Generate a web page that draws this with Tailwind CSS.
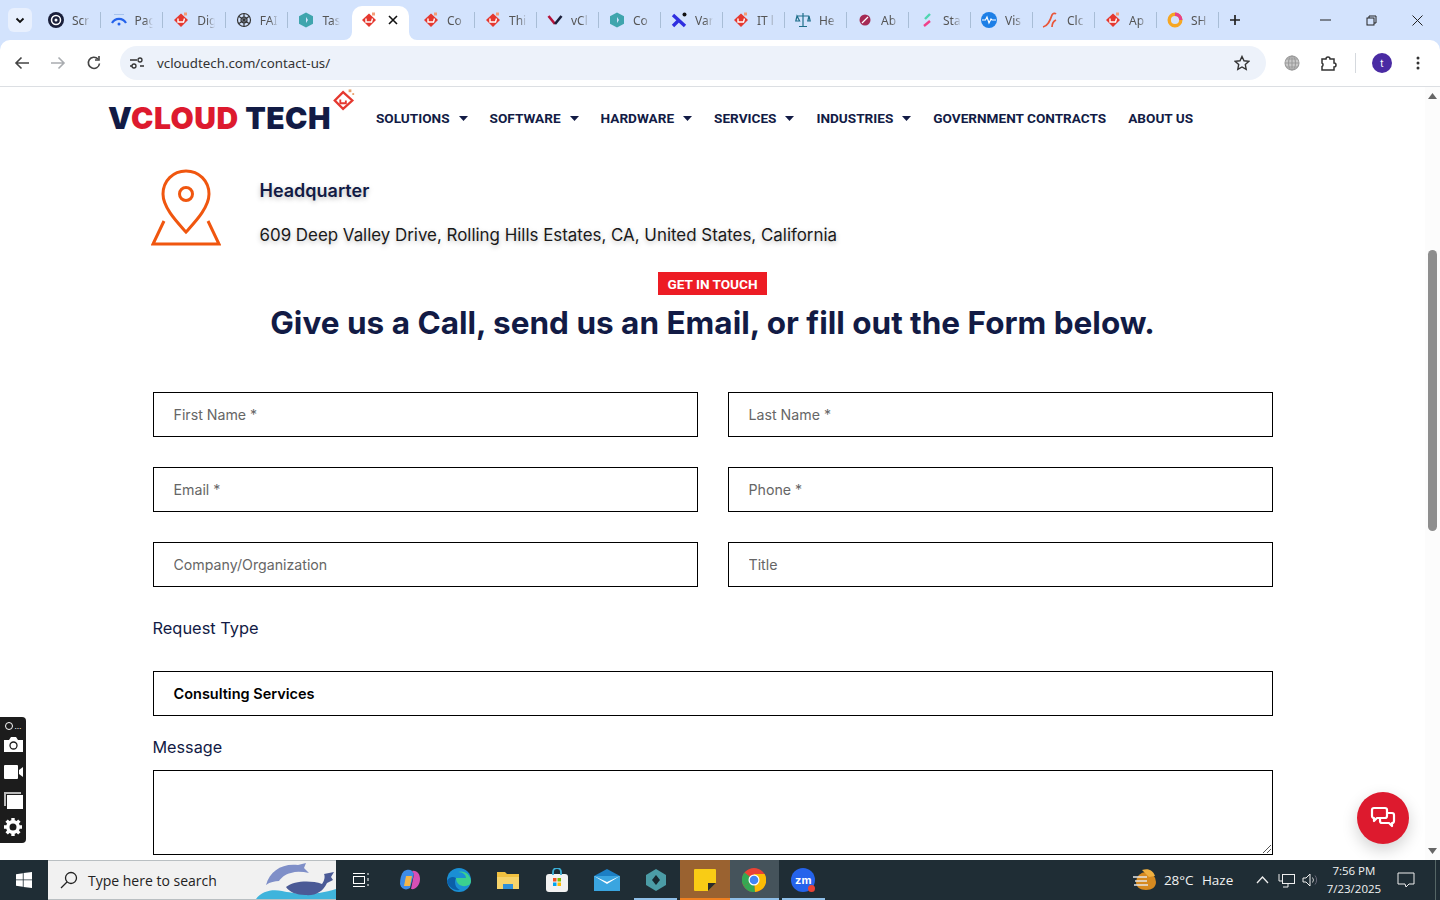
<!DOCTYPE html>
<html lang="en">
<head>
  <meta charset="UTF-8" />
  <title>Contact Us - vCloud Tech</title>
  <script src="https://cdn.jsdelivr.net/npm/@tailwindcss/browser@4"></script>
</head>
<body class="h-screen w-screen overflow-hidden flex flex-col bg-[#d3e3fd] font-['Inter',sans-serif]">

  <svg class="hidden">
    <symbol id="vc" viewBox="0 0 16 16">
      <path d="M8 1.5 15 8 8 15 1 8Z" fill="#e5382f"/>
      <path d="M5 6.5v3.5h5.5l1-3.5" fill="none" stroke="#fff" stroke-width="1.4"/>
      <rect x="11" y="0.5" width="3" height="3" fill="#f59e7a"/>
    </symbol>
  </svg>

  <!-- Tab strip -->
  <div class="h-10 bg-[#d3e3fd] flex items-center pl-2 text-[12px] text-[#555] font-['Noto_Sans',sans-serif] shrink-0">
    <div class="w-[24px] h-[24px] mr-[6px] bg-[#e8f0fe] rounded-md flex items-center justify-center">
      <svg width="10" height="10" viewBox="0 0 10 10" fill="none" stroke="#111" stroke-width="1.8"><path d="M1.5 3.5 5 7l3.500-3.500"/></svg>
    </div>
    <div class="w-[62.6px] h-10 flex items-center pl-[10px] gap-[8px] relative">
      <svg class="w-4 h-4 shrink-0" viewBox="0 0 16 16"><circle cx="8" cy="8" r="8" fill="#1a1f3a"/><circle cx="8" cy="8" r="4.500" fill="none" stroke="#fff" stroke-width="1.500"/><circle cx="8" cy="8" r="1.500" fill="#fff"/></svg>
      <span class="w-[18px] pt-[1px] whitespace-nowrap [mask-image:linear-gradient(90deg,#000_55%,transparent)]">Scr</span><i class="absolute right-0 top-[12px] h-4 w-px bg-[#a8bdd6]"></i>
    </div>
    <div class="w-[62.6px] h-10 flex items-center pl-[10px] gap-[8px] relative">
      <svg class="w-4 h-4 shrink-0" viewBox="0 0 16 16" fill="none"><path d="M1 11a8 8 0 0 1 14 0" stroke="#2563eb" stroke-width="2.200"/><path d="M3 2.500h10" stroke="#a8c4ee" stroke-width="1"/><circle cx="8" cy="12" r="1.500" fill="#2563eb"/></svg>
      <span class="w-[18px] pt-[1px] whitespace-nowrap [mask-image:linear-gradient(90deg,#000_55%,transparent)]">Pag</span><i class="absolute right-0 top-[12px] h-4 w-px bg-[#a8bdd6]"></i>
    </div>
    <div class="w-[62.6px] h-10 flex items-center pl-[10px] gap-[8px] relative">
      <svg class="w-4 h-4 shrink-0"><use href="#vc"/></svg>
      <span class="w-[18px] pt-[1px] whitespace-nowrap [mask-image:linear-gradient(90deg,#000_55%,transparent)]">Dig</span><i class="absolute right-0 top-[12px] h-4 w-px bg-[#a8bdd6]"></i>
    </div>
    <div class="w-[62.6px] h-10 flex items-center pl-[10px] gap-[8px] relative">
      <svg class="w-4 h-4 shrink-0" viewBox="0 0 16 16" fill="none" stroke="#333" stroke-width="1.200"><circle cx="8" cy="8" r="6.500"/><path d="M3 4.500l10 7M3 11.500l10-7M8 1.500v13"/><circle cx="8" cy="8" r="3"/></svg>
      <span class="w-[18px] pt-[1px] whitespace-nowrap [mask-image:linear-gradient(90deg,#000_55%,transparent)]">FAI</span><i class="absolute right-0 top-[12px] h-4 w-px bg-[#a8bdd6]"></i>
    </div>
    <div class="w-[62.6px] h-10 flex items-center pl-[10px] gap-[8px]">
      <svg class="w-4 h-4 shrink-0" viewBox="0 0 16 16"><path d="M8 .5l7 3.700v7.600l-7 3.700-7-3.700V4.200Z" fill="#3fa5ad"/><path d="M8 5l2 3-2 3Z" fill="#d3e3fd"/></svg>
      <span class="w-[18px] pt-[1px] whitespace-nowrap [mask-image:linear-gradient(90deg,#000_55%,transparent)]">Tas</span>
    </div>
    <!-- active tab -->
    <div class="w-[57px] h-[34px] self-end ml-[1px] mr-[4px] bg-white rounded-t-[10px] flex items-center pl-[9px] pb-[6px] gap-[11px] relative">
      <svg class="absolute -left-[8px] bottom-0" width="8" height="8" viewBox="0 0 8 8" fill="#fff"><path d="M8 0v8H0a8 8 0 0 0 8-8Z"/></svg>
      <svg class="w-4 h-4 shrink-0"><use href="#vc"/></svg>
      <svg width="10" height="10" viewBox="0 0 10 10" stroke="#111" stroke-width="1.600"><path d="M1 1l8 8M9 1l-8 8"/></svg>
      <svg class="absolute -right-[8px] bottom-0" width="8" height="8" viewBox="0 0 8 8" fill="#fff"><path d="M0 0v8h8a8 8 0 0 1-8-8Z"/></svg>
    </div>
    <div class="w-[62px] h-10 flex items-center pl-[10px] gap-[8px] relative">
      <svg class="w-4 h-4 shrink-0"><use href="#vc"/></svg>
      <span class="w-[18px] pt-[1px] whitespace-nowrap [mask-image:linear-gradient(90deg,#000_55%,transparent)]">Co</span><i class="absolute right-0 top-[12px] h-4 w-px bg-[#a8bdd6]"></i>
    </div>
    <div class="w-[62px] h-10 flex items-center pl-[10px] gap-[8px] relative">
      <svg class="w-4 h-4 shrink-0"><use href="#vc"/></svg>
      <span class="w-[18px] pt-[1px] whitespace-nowrap [mask-image:linear-gradient(90deg,#000_55%,transparent)]">Thi</span><i class="absolute right-0 top-[12px] h-4 w-px bg-[#a8bdd6]"></i>
    </div>
    <div class="w-[62px] h-10 flex items-center pl-[10px] gap-[8px] relative">
      <svg class="w-4 h-4 shrink-0" viewBox="0 0 16 16" fill="none" stroke-width="2.600"><path d="M1.500 4 8 12" stroke="#b5123a"/><path d="M14.500 4 8 12" stroke="#1a1f3a"/></svg>
      <span class="w-[18px] pt-[1px] whitespace-nowrap [mask-image:linear-gradient(90deg,#000_55%,transparent)]">vCl</span><i class="absolute right-0 top-[12px] h-4 w-px bg-[#a8bdd6]"></i>
    </div>
    <div class="w-[62px] h-10 flex items-center pl-[10px] gap-[8px] relative">
      <svg class="w-4 h-4 shrink-0" viewBox="0 0 16 16"><path d="M8 .5l7 3.700v7.600l-7 3.700-7-3.700V4.200Z" fill="#3fa5ad"/><path d="M8 5l2 3-2 3Z" fill="#d3e3fd"/></svg>
      <span class="w-[18px] pt-[1px] whitespace-nowrap [mask-image:linear-gradient(90deg,#000_55%,transparent)]">Co</span><i class="absolute right-0 top-[12px] h-4 w-px bg-[#a8bdd6]"></i>
    </div>
    <div class="w-[62px] h-10 flex items-center pl-[10px] gap-[8px] relative">
      <svg class="w-4 h-4 shrink-0" viewBox="0 0 16 16" fill="none"><path d="M2 3l12 11M2 14l6-6" stroke="#2f2fe0" stroke-width="3.400"/><circle cx="13.500" cy="2.500" r="2" fill="#111"/></svg>
      <span class="w-[18px] pt-[1px] whitespace-nowrap [mask-image:linear-gradient(90deg,#000_55%,transparent)]">Var</span><i class="absolute right-0 top-[12px] h-4 w-px bg-[#a8bdd6]"></i>
    </div>
    <div class="w-[62px] h-10 flex items-center pl-[10px] gap-[8px] relative">
      <svg class="w-4 h-4 shrink-0"><use href="#vc"/></svg>
      <span class="w-[18px] pt-[1px] whitespace-nowrap [mask-image:linear-gradient(90deg,#000_55%,transparent)]">IT l</span><i class="absolute right-0 top-[12px] h-4 w-px bg-[#a8bdd6]"></i>
    </div>
    <div class="w-[62px] h-10 flex items-center pl-[10px] gap-[8px] relative">
      <svg class="w-4 h-4 shrink-0" viewBox="0 0 16 16" fill="none" stroke="#1f6f8b" stroke-width="1.200"><path d="M8 1v13M4 14.500h8M2 4h12M2 4 .8 9h3.800ZM14 4l-1.200 5H15.200Z"/></svg>
      <span class="w-[18px] pt-[1px] whitespace-nowrap [mask-image:linear-gradient(90deg,#000_55%,transparent)]">He</span><i class="absolute right-0 top-[12px] h-4 w-px bg-[#a8bdd6]"></i>
    </div>
    <div class="w-[62px] h-10 flex items-center pl-[10px] gap-[8px] relative">
      <svg class="w-4 h-4 shrink-0" viewBox="0 0 16 16"><circle cx="8" cy="8" r="5.500" fill="#a52a55"/><path d="M5 11l6-6" stroke="#fff" stroke-width="1.200"/></svg>
      <span class="w-[18px] pt-[1px] whitespace-nowrap [mask-image:linear-gradient(90deg,#000_55%,transparent)]">Ab</span><i class="absolute right-0 top-[12px] h-4 w-px bg-[#a8bdd6]"></i>
    </div>
    <div class="w-[62px] h-10 flex items-center pl-[10px] gap-[8px] relative">
      <svg class="w-4 h-4 shrink-0" viewBox="0 0 16 16" fill="none" stroke-width="2.400"><path d="M5 14l6-5" stroke="#f0408a"/><path d="M6 7l5-5" stroke="#4fd6b0"/></svg>
      <span class="w-[18px] pt-[1px] whitespace-nowrap [mask-image:linear-gradient(90deg,#000_55%,transparent)]">Sta</span><i class="absolute right-0 top-[12px] h-4 w-px bg-[#a8bdd6]"></i>
    </div>
    <div class="w-[62px] h-10 flex items-center pl-[10px] gap-[8px] relative">
      <svg class="w-4 h-4 shrink-0" viewBox="0 0 16 16"><circle cx="8" cy="8" r="8" fill="#1d7fe6"/><path d="M1 8h3.500l1.500-3 2 6 2-4 1 1h4" fill="none" stroke="#fff" stroke-width="1.200"/></svg>
      <span class="w-[18px] pt-[1px] whitespace-nowrap [mask-image:linear-gradient(90deg,#000_55%,transparent)]">Vis</span><i class="absolute right-0 top-[12px] h-4 w-px bg-[#a8bdd6]"></i>
    </div>
    <div class="w-[62px] h-10 flex items-center pl-[9px] gap-[7px] relative">
      <svg class="w-[18px] h-4 shrink-0" viewBox="0 0 18 16" fill="none" stroke="#e8563a" stroke-width="1.700"><path d="M1 15c5-1 7-6 9-12 1-2 3-2 4-1"/><path d="M10 15c0-3 2-6 4-7"/></svg>
      <span class="w-[18px] pt-[1px] whitespace-nowrap [mask-image:linear-gradient(90deg,#000_55%,transparent)]">Clc</span><i class="absolute right-0 top-[12px] h-4 w-px bg-[#a8bdd6]"></i>
    </div>
    <div class="w-[62px] h-10 flex items-center pl-[10px] gap-[8px] relative">
      <svg class="w-4 h-4 shrink-0"><use href="#vc"/></svg>
      <span class="w-[18px] pt-[1px] whitespace-nowrap [mask-image:linear-gradient(90deg,#000_55%,transparent)]">Ap</span><i class="absolute right-0 top-[12px] h-4 w-px bg-[#a8bdd6]"></i>
    </div>
    <div class="w-[62px] h-10 flex items-center pl-[10px] gap-[8px] relative">
      <svg class="w-4 h-4 shrink-0" viewBox="0 0 16 16" fill="none"><circle cx="8" cy="8" r="5.800" stroke="#f6a623" stroke-width="3.400"/><path d="M8 2.200a5.800 5.800 0 0 1 5.800 5.800" stroke="#e8408a" stroke-width="3.400"/></svg>
      <span class="w-[18px] pt-[1px] whitespace-nowrap [mask-image:linear-gradient(90deg,#000_55%,transparent)]">SH</span><i class="absolute right-0 top-[12px] h-4 w-px bg-[#a8bdd6]"></i>
    </div>
    <svg class="ml-[10px]" width="12" height="12" viewBox="0 0 12 12" stroke="#222" stroke-width="1.700"><path d="M6 1v10M1 6h10"/></svg>
    <div class="ml-auto flex items-center h-10">
      <div class="w-[46px] flex justify-center"><svg width="11" height="2" stroke="#222"><path d="M0 1h11"/></svg></div>
      <div class="w-[46px] flex justify-center"><svg width="11" height="11" viewBox="0 0 11 11" fill="none" stroke="#222"><rect x="1" y="3" width="7" height="7"/><path d="M3 3V1h7v7H8"/></svg></div>
      <div class="w-[46px] flex justify-center"><svg width="11" height="11" viewBox="0 0 11 11" stroke="#222"><path d="M.5.5l10 10M10.500.5l-10 10"/></svg></div>
    </div>
  </div>

  <!-- Toolbar -->
  <div class="h-[47px] bg-white border-b border-[#dcdfe3] flex items-center shrink-0 rounded-t-[10px] pl-[14px]">
    <svg width="16" height="16" viewBox="0 0 16 16" fill="none" stroke="#444" stroke-width="1.600"><path d="M15 8H2M7.500 2.500 2 8l5.500 5.500"/></svg>
    <svg class="ml-[20px]" width="16" height="16" viewBox="0 0 16 16" fill="none" stroke="#a9acb0" stroke-width="1.600"><path d="M1 8h13M8.500 2.500 14 8l-5.500 5.500"/></svg>
    <svg class="ml-[20px]" width="16" height="16" viewBox="0 0 16 16" fill="none" stroke="#444" stroke-width="1.600"><path d="M13.500 8.500A5.600 5.600 0 1 1 12 4"/><path d="M13 1v4h-4"/></svg>
    <div class="ml-[18px] w-[1146px] h-[34px] bg-[#edf2fa] rounded-full flex items-center pl-[9px] pr-[16px]">
      <svg width="16" height="16" viewBox="0 0 16 16" fill="none" stroke="#333" stroke-width="1.300"><path d="M1 5h7M11 11h4"/><circle cx="11" cy="5" r="2"/><circle cx="5" cy="11" r="2"/><path d="M1 11h2"/></svg>
      <span class="ml-[12px] pt-[1px] text-[13.3px] text-[#333] font-['Noto_Sans',sans-serif]">vcloudtech.com/contact-us/</span>
      <svg class="ml-auto" width="16" height="16" viewBox="0 0 16 16" fill="none" stroke="#333" stroke-width="1.400"><path d="m8 1.500 2 4.300 4.700.6-3.400 3.200.9 4.700L8 12l-4.200 2.300.9-4.700L1.300 6.400l4.700-.6Z"/></svg>
    </div>
    <svg class="ml-[18px]" width="16" height="16" viewBox="0 0 16 16" fill="none" stroke="#9b9b9b" stroke-width="1.100"><circle cx="8" cy="8" r="7" fill="#c9c9c9"/><path d="M1 8h14M8 1v14M3 4h10M3 12h10"/><ellipse cx="8" cy="8" rx="3.500" ry="7"/></svg>
    <svg class="ml-[20px]" width="18" height="18" viewBox="0 0 18 18" fill="none" stroke="#333" stroke-width="1.500"><path d="M2 5h4a2 2 0 0 1 4 0h4v4a2 2 0 0 1 0 4v3H2v-3.500a2 2 0 0 0 0-3.500Z"/></svg>
    <div class="ml-[17px] w-px h-5 bg-[#d5d9de]"></div>
    <div class="ml-[16px] w-5 h-5 rounded-full bg-[#4a2ba3] text-white text-[10px] flex items-center justify-center">t</div>
    <svg class="ml-[24px]" width="4" height="14" viewBox="0 0 4 14" fill="#333"><circle cx="2" cy="2" r="1.500"/><circle cx="2" cy="7" r="1.500"/><circle cx="2" cy="12" r="1.500"/></svg>
  </div>

  <!-- Page + scrollbar -->
  <div class="flex-1 min-h-0 flex relative overflow-hidden bg-white">
    <main class="flex-1 min-w-0 overflow-hidden">

      <header class="h-[63px] flex items-center pl-[108px] font-['Roboto',sans-serif] text-[13.6px] font-bold text-[#121b45]">
        <div class="w-[247px] h-[63px] relative shrink-0 font-['Inter',sans-serif] text-[30px] font-black tracking-[0.5px] leading-[62px] whitespace-nowrap">
          <span class="text-[#121b45]">V</span><span class="text-[#dd1a2e]">CLOUD</span> <span class="text-[#121b45]">TECH</span>
          <svg class="absolute left-[224px] top-[1px]" width="24" height="25" viewBox="0 0 26 26" fill="none"><path d="M12 4 22 13 12 22 3 13Z" stroke="#e5382f" stroke-width="2.500"/><path d="M9 12v4h6v-3" stroke="#e5382f" stroke-width="2"/><rect x="18" y="1" width="3" height="3" fill="#e8a06a"/><rect x="22" y="5" width="2" height="2" fill="#e8a06a"/></svg>
        </div>
        <nav class="ml-[21px] flex items-center whitespace-nowrap">
          <a class="flex items-center gap-[9px] mr-[22px]">SOLUTIONS <svg width="9" height="5" viewBox="0 0 9 5" fill="#121b45"><path d="M0 0h9L4.500 5Z"/></svg></a>
          <a class="flex items-center gap-[9px] mr-[22px]">SOFTWARE <svg width="9" height="5" viewBox="0 0 9 5" fill="#121b45"><path d="M0 0h9L4.500 5Z"/></svg></a>
          <a class="flex items-center gap-[9px] mr-[22px]">HARDWARE <svg width="9" height="5" viewBox="0 0 9 5" fill="#121b45"><path d="M0 0h9L4.500 5Z"/></svg></a>
          <a class="flex items-center gap-[9px] mr-[22px]">SERVICES <svg width="9" height="5" viewBox="0 0 9 5" fill="#121b45"><path d="M0 0h9L4.500 5Z"/></svg></a>
          <a class="flex items-center gap-[9px] mr-[22px]">INDUSTRIES <svg width="9" height="5" viewBox="0 0 9 5" fill="#121b45"><path d="M0 0h9L4.500 5Z"/></svg></a>
          <a class="mr-[22px]">GOVERNMENT CONTRACTS</a>
          <a>ABOUT US</a>
        </nav>
      </header>

      <div class="w-[1120px] mx-auto">
        <!-- Headquarter -->
        <div class="flex h-[122px] items-start">
          <svg class="w-[70px] h-[78px] mt-[19px] -ml-[2px] shrink-0" viewBox="0 0 70 78" fill="none" stroke="#f0560f" stroke-width="3"><path d="M35 2c13 0 23 10 23 23 0 14-15 29-23 38C27 54 12 39 12 25 12 12 22 2 35 2Z"/><circle cx="35" cy="25" r="6.500"/><path d="M13 52 2 75h66L57 52"/></svg>
          <div class="ml-[39px] [text-shadow:0_2px_5px_rgba(0,0,0,0.25)]">
            <div class="mt-[29px] text-[18px] leading-[24px] font-semibold text-[#121b45]">Headquarter</div>
            <div class="mt-[20px] text-[16.9px] leading-[24px] text-[#1a1a1a]">609 Deep Valley Drive, Rolling Hills Estates, CA, United States, California</div>
          </div>
        </div>

        <!-- Heading -->
        <div class="flex flex-col items-center">
          <span class="h-[23px] px-[9.5px] bg-[#ed1c24] text-white font-['Roboto',sans-serif] text-[13.6px] font-bold leading-[24px]">GET IN TOUCH</span>
          <h1 class="mt-[8px] text-[31.5px] leading-[40px] font-bold text-[#121b45]">Give us a Call, send us an Email, or fill out the Form below.</h1>
        </div>

        <!-- Form -->
        <form class="mt-[49px] text-[14.2px]">
          <div class="grid grid-cols-2 gap-x-[30px] gap-y-[30px]">
            <input class="h-[45px] px-[20px] pb-[1px] border border-black outline-none placeholder:text-[#666]" placeholder="First Name *" />
            <input class="h-[45px] px-[20px] pb-[1px] border border-black outline-none placeholder:text-[#666]" placeholder="Last Name *" />
            <input class="h-[45px] px-[20px] pb-[1px] border border-black outline-none placeholder:text-[#666]" placeholder="Email *" />
            <input class="h-[45px] px-[20px] pb-[1px] border border-black outline-none placeholder:text-[#666]" placeholder="Phone *" />
            <input class="h-[45px] px-[20px] pb-[1px] border border-black outline-none placeholder:text-[#666]" placeholder="Company/Organization" />
            <input class="h-[45px] px-[20px] pb-[1px] border border-black outline-none placeholder:text-[#666]" placeholder="Title" />
          </div>
          <div class="mt-[29px] text-[16.4px] leading-[24px] text-[#121b45]">Request Type</div>
          <div class="mt-[31px] h-[45px] px-[20px] border border-black flex items-center text-[14.5px] font-semibold text-black">Consulting Services</div>
          <div class="mt-[19px] text-[16.2px] leading-[24px] text-[#121b45]">Message</div>
          <div class="mt-[11px] h-[85px] border border-black relative">
            <svg class="absolute right-0 bottom-0" width="10" height="10" viewBox="0 0 10 10" stroke="#555"><path d="M1 9l8-8M5 9l4-4"/></svg>
          </div>
        </form>
      </div>
    </main>

    <!-- Scrollbar -->
    <div class="w-[15px] shrink-0 bg-[#fcfcfc] relative">
      <svg class="absolute left-[3px] top-[6px]" width="9" height="6" viewBox="0 0 9 6" fill="#666"><path d="M4.500 0 9 6H0Z"/></svg>
      <div class="absolute left-[3px] top-[163px] w-[9px] h-[281px] rounded-full bg-[#8e8e8e]"></div>
      <svg class="absolute left-[3px] bottom-[6px]" width="9" height="6" viewBox="0 0 9 6" fill="#666"><path d="M0 0h9L4.500 6Z"/></svg>
    </div>

    <!-- Capture widget -->
    <div class="absolute left-0 top-[630px] w-[26px] h-[126px] bg-[#1c1c1c] rounded-r-[4px] flex flex-col items-center pt-[3px]">
      <div class="h-3 flex items-center gap-[2px]"><span class="w-2 h-2 rounded-full border border-white"></span><span class="text-white text-[8px] leading-none">…</span></div>
      <svg class="mt-[5px]" width="19" height="15" viewBox="0 0 19 15"><path d="M0 3h5l2-3h5l2 3h5v12H0Z" fill="#fff"/><circle cx="9.500" cy="8.500" r="3.500" fill="none" stroke="#1c1c1c" stroke-width="1.300"/></svg>
      <svg class="mt-[13px]" width="19" height="14" viewBox="0 0 19 14" fill="#fff"><rect width="14" height="14" rx="1"/><path d="M15 5l4-3v10l-4-3Z"/></svg>
      <svg class="mt-[12px]" width="19" height="18" viewBox="0 0 19 18"><path d="M0 1h17v2H2v12H0Z" fill="#bbb"/><rect x="3" y="4" width="16" height="14" fill="#fff"/></svg>
      <svg class="mt-[8px]" width="20" height="20" viewBox="0 0 20 20"><g fill="none" stroke="#fff" stroke-width="3.400"><path d="M10 1v18M1 10h18M3.600 3.600l12.800 12.800M16.400 3.600 3.600 16.400" stroke-dasharray="4 10 4"/></g><circle cx="10" cy="10" r="5.200" fill="none" stroke="#fff" stroke-width="3.400"/></svg>
    </div>

    <!-- Chat bubble -->
    <div class="absolute left-[1357px] top-[705px] w-[52px] h-[52px] rounded-full bg-[#dd1a2e] shadow-[0_6px_16px_rgba(0,0,0,0.18)] flex items-center justify-center">
      <svg width="26" height="24" viewBox="0 0 26 24" fill="none" stroke="#fff" stroke-width="2.200" stroke-linejoin="round"><path d="M4 2h11a2 2 0 0 1 2 2v6a2 2 0 0 1-2 2H7l-3 3v-3a2 2 0 0 1-2-2V4a2 2 0 0 1 2-2Z"/><path d="M10 12v3a2 2 0 0 0 2 2h7l3 3v-3a2 2 0 0 0 2-2V9a2 2 0 0 0-2-2h-5"/></svg>
    </div>
  </div>

  <!-- Taskbar -->
  <div class="h-10 bg-[#1f2d35] flex items-center shrink-0 text-white">
    <div class="w-12 flex justify-center">
      <svg width="16" height="16" viewBox="0 0 16 16" fill="#fff"><path d="M0 2.200 6.800 1.200V7.500H0ZM7.600 1.100 16 0V7.500H7.600ZM0 8.300h6.800v6.500L0 13.800ZM7.600 8.300H16V16L7.600 14.900Z"/></svg>
    </div>
    <div class="w-[288px] h-10 bg-[#f1f1f1] border-y border-[#b9bfc2] flex items-center pl-[12px] text-[#222] text-[14px] font-['Open_Sans',sans-serif] relative overflow-hidden">
      <svg width="18" height="18" viewBox="0 0 18 18" fill="none" stroke="#222" stroke-width="1.300"><circle cx="11" cy="7" r="5.500"/><path d="M7 11 1 17"/></svg>
      <span class="ml-[10px]">Type here to search</span>
      <svg class="absolute right-0 bottom-0" width="80" height="38" viewBox="0 0 80 38"><path d="M0 38c6-8 16-10 26-8s30 6 54-2v10Z" fill="#3fb4dc"/><path d="M10 24C14 10 26 2 42 4l8-2-2 5 5 5c-6-1-12-2-18 0-6 1-10 5-12 8-4 0-9 1-13 4Z" fill="#7f8fc8"/><path d="M30 26c8-6 24-7 36-3 3-4 3-8 2-10l10-2-3 5 2 3-6 3c-4 9-12 13-22 12-8 0-16-3-19-8Z" fill="#4b5a96"/></svg>
    </div>
    <div class="w-[49.2px] flex justify-center">
      <svg width="18" height="16" viewBox="0 0 18 16" fill="none" stroke="#fff"><rect x="1.500" y="4.500" width="11" height="7"/><path d="M1 1.500h12M1 14.500h12M16 1v2M16 6v3M16 12v2"/></svg>
    </div>
    <div class="w-[49.2px] flex justify-center">
      <svg width="24" height="24" viewBox="0 0 24 24"><path d="M6 3c6-3 9 0 10 3L12 20c-4 3-9 1-10-4 0-5 1-10 4-13Z" fill="#3d8ce8"/><path d="M14 3c5-1 8 3 8 8 0 6-4 11-9 10l3-15Z" fill="#d64fb5"/><path d="M8 8h6l-2 10H6Z" fill="#f3b64a"/></svg>
    </div>
    <div class="w-[49.2px] flex justify-center">
      <svg width="24" height="24" viewBox="0 0 24 24"><circle cx="12" cy="12" r="12" fill="#1a8fd4"/><path d="M24 13c-1-7-7-11-13-9 5 0 8 3 8 6H9c0 7 7 10 13 7 1-1 2-2 2-4Z" fill="#3bd08f"/><path d="M9 10c-2 4-1 10 4 12-6 1-12-3-13-9 2-4 6-5 9-3Z" fill="#0b5fa8"/></svg>
    </div>
    <div class="w-[49.2px] flex justify-center">
      <svg width="22" height="20" viewBox="0 0 22 20"><path d="M0 2h8l2 2h12v15H0Z" fill="#f0c040"/><rect x="0" y="7" width="22" height="12" fill="#f6d36a"/><path d="M6 14h10v5H6Z" fill="#2f8fd8"/></svg>
    </div>
    <div class="w-[49.2px] flex justify-center">
      <svg width="24" height="24" viewBox="0 0 24 24"><rect x="1" y="6" width="22" height="18" rx="3" fill="#f2f2f2"/><path d="M8 7V4a4 4 0 0 1 8 0v3" fill="none" stroke="#3bb0d8" stroke-width="1.800"/><rect x="8" y="10" width="3.500" height="3.500" fill="#f25022"/><rect x="12.500" y="10" width="3.500" height="3.500" fill="#7fba00"/><rect x="8" y="14.500" width="3.500" height="3.500" fill="#00a4ef"/><rect x="12.500" y="14.500" width="3.500" height="3.500" fill="#ffb900"/></svg>
    </div>
    <div class="w-[49.2px] flex justify-center">
      <svg width="26" height="22" viewBox="0 0 26 22"><path d="M0 7 13 0l13 7v15H0Z" fill="#1c7fc4"/><path d="M0 7h26v15H0Z" fill="#3aa5e0"/><path d="M0 7l13 8 13-8-13 6Z" fill="#fff"/></svg>
    </div>
    <div class="w-[49.2px] h-10 flex justify-center items-center relative">
      <svg width="24" height="24" viewBox="0 0 24 24"><path d="M12 1l10 6v10l-10 6-10-6V7Z" fill="#4b9ca6"/><path d="M12 7l4 5-4 5-4-5Z" fill="#17262e"/></svg>
      <i class="absolute bottom-0 left-[3px] right-[3px] h-[2px] bg-[#8fbfe8]"></i>
    </div>
    <div class="w-[49.2px] h-10 bg-[#9a6230] flex justify-center items-center relative">
      <svg width="22" height="22" viewBox="0 0 22 22"><path d="M1 0h20a1 1 0 0 1 1 1v13l-8 8H1a1 1 0 0 1-1-1V1a1 1 0 0 1 1-1Z" fill="#f9cc15"/><path d="M14 22v-8h8Z" fill="#2b2b2b"/></svg>
      <i class="absolute bottom-0 left-0 right-0 h-[2px] bg-[#f08020]"></i>
    </div>
    <div class="w-[49.2px] h-10 bg-[#45535b] flex justify-center items-center relative">
      <svg width="24" height="24" viewBox="0 0 24 24"><circle cx="12" cy="12" r="12" fill="#ea4335"/><path d="M12 12 1.600 18A12 12 0 0 0 13 24Z" fill="#34a853"/><path d="M12 6h10.600A12 12 0 0 1 13 24Z" fill="#fbbc05"/><path d="M12 12 1.600 18A12 12 0 0 1 2.500 4.500Z" fill="#34a853"/><circle cx="12" cy="12" r="5.500" fill="#fff"/><circle cx="12" cy="12" r="4.300" fill="#4285f4"/></svg>
      <i class="absolute bottom-0 left-0 right-0 h-[2px] bg-[#8fbfe8]"></i>
    </div>
    <div class="w-[49.2px] h-10 flex justify-center items-center relative">
      <div class="w-6 h-6 rounded-full bg-[#2563eb] text-white text-[11px] font-bold flex items-center justify-center relative">zm<span class="absolute right-0 bottom-0 w-[7px] h-[7px] rounded-full bg-[#ea4335]"></span></div>
      <i class="absolute bottom-0 left-[3px] right-[3px] h-[2px] bg-[#8fbfe8]"></i>
    </div>

    <!-- Tray -->
    <svg class="ml-[304px]" width="26" height="24" viewBox="0 0 26 24"><path d="M4 14a10 10 0 0 1 20 0c0 5-4 8-10 8S4 19 4 14Z" fill="#d68a20"/><path d="M10 2c6-2 11 0 13 6l-6 1Z" fill="#f0b040"/><path d="M1 9h14M3 13h12M2 17h14" stroke="#e5e5e5" stroke-width="1.600"/></svg>
    <span class="ml-[6px] w-[29px] whitespace-nowrap text-[13.5px] font-['Open_Sans',sans-serif] text-[#f2f2f2]">28°C</span>
    <span class="ml-[9px] w-[30px] whitespace-nowrap text-[13.5px] font-['Open_Sans',sans-serif] text-[#f2f2f2]">Haze</span>
    <svg class="ml-[24px]" width="13" height="8" viewBox="0 0 13 8" fill="none" stroke="#eee" stroke-width="1.300"><path d="M1 7l5.500-6L12 7"/></svg>
    <svg class="ml-[9px]" width="17" height="15" viewBox="0 0 17 15" fill="none" stroke="#eee"><rect x="4.500" y="1.500" width="12" height="9"/><path d="M10 11v3h-5M1 1v7h3"/></svg>
    <svg class="ml-[7px]" width="16" height="14" viewBox="0 0 16 14" fill="none" stroke="#eee"><path d="M1 5h3l4-4v12L4 9H1Z"/><path d="M10.500 4.500a4 4 0 0 1 0 5" stroke="#ccc"/><path d="M13 2.500a7 7 0 0 1 0 9" stroke="#667"/></svg>
    <div class="ml-[4px] w-[64px] text-center text-[11.5px] leading-[18px] font-['Open_Sans',sans-serif] text-[#f2f2f2]"><div>7:56 PM</div><div>7/23/2025</div></div>
    <svg class="ml-[11px]" width="18" height="16" viewBox="0 0 18 16" fill="none" stroke="#eee"><path d="M1 1h16v11h-5l-3 3-1-3H1Z"/></svg>
    <i class="ml-auto mr-[4px] w-px h-full bg-[#566]"></i>
  </div>

</body>
</html>
